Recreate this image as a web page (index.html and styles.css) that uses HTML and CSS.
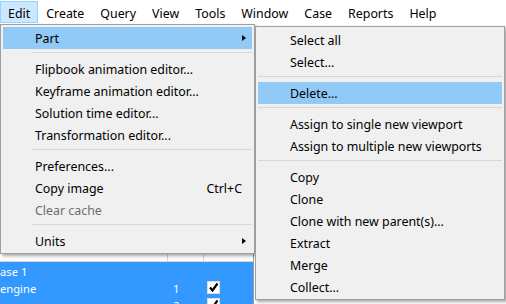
FILE: index.html
```html
<!DOCTYPE html>
<html lang="en">
<head>
  <meta charset="UTF-8" />
  <meta name="viewport" content="width=device-width, initial-scale=1.0"/>
  <title>Edit menu</title>
  <link rel="stylesheet" href="styles.css">
</head>
<body>

  <!-- Menu bar -->
  <div class="menubar">
    <span class="menubar-item open">Edit</span>
    <span class="menubar-item">Create</span>
    <span class="menubar-item">Query</span>
    <span class="menubar-item">View</span>
    <span class="menubar-item">Tools</span>
    <span class="menubar-item">Window</span>
    <span class="menubar-item">Case</span>
    <span class="menubar-item">Reports</span>
    <span class="menubar-item">Help</span>
  </div>

  <!-- Window content behind the menus -->
  <div class="workspace">
    <div class="parts-panel">
      <div class="panel-top"></div>
      <div class="parts-header">
        <span class="col-name"></span>
        <span class="col-id">ID</span>
        <span class="col-show">Show</span>
      </div>
      <div class="parts-row">
        <span class="col-name case">Case 1</span>
        <span class="col-id"></span>
        <span class="col-show"></span>
      </div>
      <div class="parts-row">
        <span class="col-name">engine</span>
        <span class="col-id">1</span>
        <span class="col-show">
          <span class="checkbox">
            <svg width="11" height="11" viewBox="0 0 11 11"><path d="M2 5.5 L4.5 8.5 L9.5 1.5" fill="none" stroke="#000" stroke-width="2.2"/></svg>
          </span>
        </span>
      </div>
      <div class="parts-row">
        <span class="col-name"></span>
        <span class="col-id">2</span>
        <span class="col-show">
          <span class="checkbox">
            <svg width="11" height="11" viewBox="0 0 11 11"><path d="M2 5.5 L4.5 8.5 L9.5 1.5" fill="none" stroke="#000" stroke-width="2.2"/></svg>
          </span>
        </span>
      </div>
    </div>
    <div class="viewport"></div>
  </div>

  <!-- Edit dropdown -->
  <ul class="menu edit-menu">
    <li class="menu-item active">Part<span class="submenu-arrow"></span></li>
    <li class="menu-sep"></li>
    <li class="menu-item">Flipbook animation editor...</li>
    <li class="menu-item">Keyframe animation editor...</li>
    <li class="menu-item">Solution time editor...</li>
    <li class="menu-item">Transformation editor...</li>
    <li class="menu-sep"></li>
    <li class="menu-item">Preferences...</li>
    <li class="menu-item">Copy image<span class="shortcut">Ctrl+C</span></li>
    <li class="menu-item disabled">Clear cache</li>
    <li class="menu-sep"></li>
    <li class="menu-item">Units<span class="submenu-arrow"></span></li>
  </ul>

  <!-- Part submenu -->
  <ul class="menu part-menu">
    <li class="menu-item">Select all</li>
    <li class="menu-item">Select...</li>
    <li class="menu-sep"></li>
    <li class="menu-item active">Delete...</li>
    <li class="menu-sep"></li>
    <li class="menu-item">Assign to single new viewport</li>
    <li class="menu-item">Assign to multiple new viewports</li>
    <li class="menu-sep"></li>
    <li class="menu-item">Copy</li>
    <li class="menu-item">Clone</li>
    <li class="menu-item">Clone with new parent(s)...</li>
    <li class="menu-item">Extract</li>
    <li class="menu-item">Merge</li>
    <li class="menu-item">Collect...</li>
  </ul>

</body>
</html>
```

FILE: styles.css
```css
body {
  margin: 0;
  width: 506px;
  height: 304px;
  overflow: hidden;
  position: relative;
  background: #fff;
  font-family: 'Noto Sans', 'Segoe UI', sans-serif;
  font-size: 12.4px;
  color: #000;
}

/* menu bar */
.menubar {
  display: flex;
  height: 24px;
  background: #fff;
}

.menubar-item {
  box-sizing: border-box;
  height: 22px;
  margin-top: 1px;
  padding: 3px 7px 0;
  line-height: 17px;
  border: 1px solid transparent;
}

.menubar-item.open {
  background: #cce8ff;
  border-color: #99d1ff;
}

/* content behind */
.workspace {
  display: flex;
  height: 280px;
}

.parts-panel {
  box-sizing: border-box;
  width: 254px;
  border-right: 1px solid #a0a0a0;
  font-size: 11.2px;
}

.panel-top {
  height: 216px;
  background: #f0f0f0;
}

.parts-header {
  display: flex;
  height: 22px;
  box-sizing: border-box;
  line-height: 17px;
  background: #fff;
  color: #000;
  border-bottom: 1px solid #d5d5d5;
}

.parts-row {
  display: flex;
  align-items: flex-start;
  box-sizing: border-box;
  height: 17px;
  padding-top: 2px;
  line-height: 15px;
  background: #3399ff;
  color: #fff;
}

.col-name {
  width: 167px;
  white-space: nowrap;
}

.col-name.case {
  text-indent: -7px;
}

.col-id {
  box-sizing: border-box;
  width: 36px;
  padding-left: 5px;
  border-left: 1px solid transparent;
}

.col-show {
  display: flex;
  padding-left: 3px;
  border-left: 1px solid transparent;
}

.parts-header .col-id,
.parts-header .col-show {
  border-left-color: #d5d5d5;
  padding-left: 2px;
}

.checkbox {
  box-sizing: border-box;
  width: 13px;
  height: 13px;
  background: #fff;
  border: 1px solid #dcdcdc;
  display: flex;
  align-items: center;
  justify-content: center;
}

.viewport {
  flex: 1;
  background: #fff;
}

/* dropdown menus */
.menu {
  position: absolute;
  margin: 0;
  list-style: none;
  box-sizing: border-box;
  background: #f0f0f0;
  border: 1px solid #a0a0a0;
  box-shadow: 2px 2px 3px rgba(0, 0, 0, 0.35);
}

.edit-menu {
  left: 0;
  top: 24px;
  width: 255px;
  padding: 2px 2px 1px;
}

.part-menu {
  left: 255px;
  top: 26px;
  width: 250px;
  padding: 2px 2px 1px;
}

.menu-item {
  display: flex;
  align-items: center;
  box-sizing: border-box;
  height: 22px;
  padding: 1px 6px 0 32px;
  line-height: 21px;
  white-space: nowrap;
}

.menu-item.active {
  background: #91c9f7;
}

.menu-item.disabled {
  color: #6d6d6d;
}

.menu-sep {
  height: 1px;
  margin: 3px 0 5px 29px;
  background: #d7d7d7;
}

.part-menu .menu-sep {
  margin-left: 0;
}

.shortcut {
  margin-left: auto;
  padding-right: 4px;
}

.submenu-arrow {
  margin-left: auto;
  margin-bottom: 2px;
  width: 0;
  height: 0;
  border-left: 4px solid #000;
  border-top: 3.5px solid transparent;
  border-bottom: 3.5px solid transparent;
}
```
